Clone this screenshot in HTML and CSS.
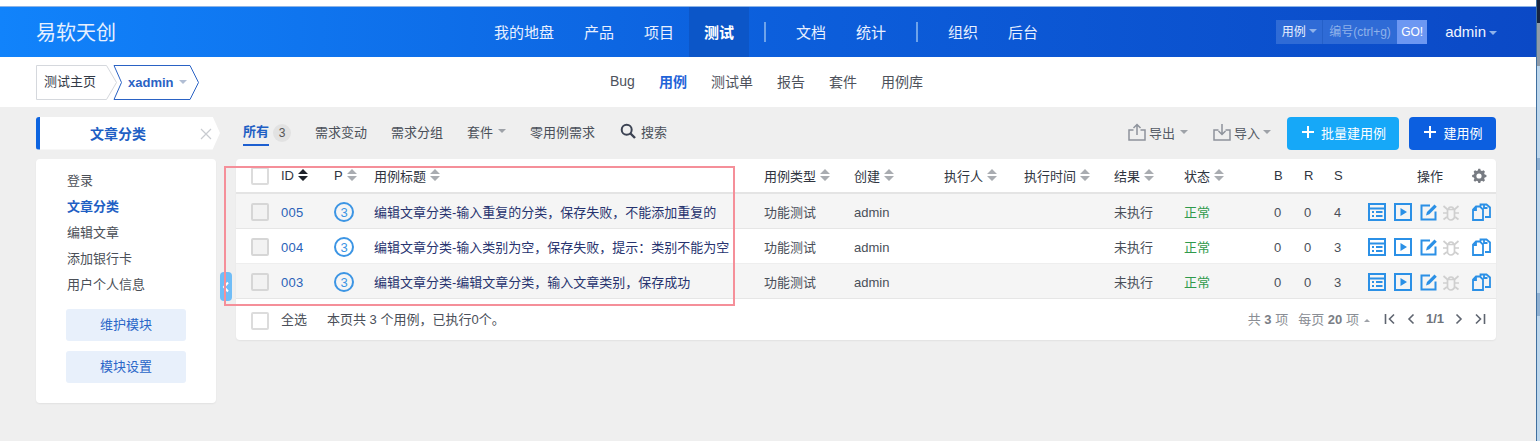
FILE: index.html
```html
<!DOCTYPE html>
<html lang="zh">
<head>
<meta charset="utf-8">
<title>用例</title>
<link rel="stylesheet" href="styles.css">
</head>
<body>
<svg class="defs" width="0" height="0" aria-hidden="true">
  <symbol id="i-list" viewBox="0 0 18 18"><path d="M1 1h16v16H1zM1 5.500h16M4 9h2M8 9h6.500M4 13h2M8 13h6.500" fill="none" stroke="currentColor" stroke-width="2"/></symbol>
  <symbol id="i-play" viewBox="0 0 18 18"><path d="M1 1h16v16H1z" fill="none" stroke="currentColor" stroke-width="2"/><path d="M6.500 5l6.500 4-6.500 4z" fill="currentColor"/></symbol>
  <symbol id="i-edit" viewBox="0 0 18 18"><path d="M15.500 8.500V16.500h-14v-14H10" fill="none" stroke="currentColor" stroke-width="2"/><path d="M6 12.500l1-3.500 7.500-7.500 2.300 2.300-7.500 7.500z" fill="currentColor"/></symbol>
  <symbol id="i-bug" viewBox="0 0 18 18"><path d="M5.500 6.500h7v7a3.500 3.500 0 0 1-7 0zM6.500 6.500a2.500 2.500 0 0 1 5 0M1.500 3l4 3.500M16.500 3l-4 3.500M1 10h4.500M17 10h-4.500M1.500 16.500l4-3M16.500 16.500l-4-3" fill="none" stroke="currentColor" stroke-width="1.700"/></symbol>
  <symbol id="i-copy" viewBox="0 0 19 18"><path d="M11 6.500V17H1V6.500L4 3.500h4zM4 3.500V7H1M8.500 3V1.500h3.500L12 5h3.500M12 1.500h2.500l3.500 3V14h-5" fill="none" stroke="currentColor" stroke-width="1.800"/></symbol>
  <symbol id="i-sort" viewBox="0 0 10 12"><path d="M5 0l5 5H0zM5 12L0 7h10z" fill="currentColor"/></symbol>
</svg>

<div class="page">
  <div class="topstrip"></div>
  <header class="header">
    <div class="brand">易软天创</div>
    <nav class="mainnav">
      <a class="nav-item">我的地盘</a>
      <a class="nav-item">产品</a>
      <a class="nav-item">项目</a>
      <a class="nav-item active">测试</a>
      <span class="nav-sep"></span>
      <a class="nav-item">文档</a>
      <a class="nav-item">统计</a>
      <span class="nav-sep"></span>
      <a class="nav-item">组织</a>
      <a class="nav-item">后台</a>
    </nav>
    <div class="header-right">
      <div class="search">
        <span class="search-type">用例<i class="caret caret-light"></i></span>
        <span class="search-input">编号(ctrl+g)</span>
        <span class="search-go">GO!</span>
      </div>
      <span class="user">admin<i class="caret caret-light"></i></span>
    </div>
  </header>

  <div class="subbar">
    <div class="crumbs">
      <svg class="crumb crumb-home" width="82" height="36" viewBox="0 0 82 36"><path d="M.5.500h70l10 17-10 17H.5z" fill="#fff" stroke="#d5d8dd"/></svg>
      <span class="crumb-text crumb-text-home">测试主页</span>
      <svg class="crumb crumb-prod" width="88" height="36" viewBox="0 0 88 36"><path d="M1 .500h76l8.500 17-8.500 17H1l7.500-17z" fill="#fff" stroke="#2a62c4"/></svg>
      <span class="crumb-text crumb-text-prod">xadmin<i class="caret caret-soft"></i></span>
    </div>
    <nav class="subnav">
      <a>Bug</a>
      <a class="on">用例</a>
      <a>测试单</a>
      <a>报告</a>
      <a>套件</a>
      <a>用例库</a>
    </nav>
  </div>

  <div class="content">
    <div class="toolbar">
      <div class="module-title">
        <span>文章分类</span>
        <svg class="close-x" width="12" height="12" viewBox="0 0 12 12"><path d="M1 1l10 10M11 1L1 11" stroke="#c8cbd0" stroke-width="1.200"/></svg>
      </div>
      <div class="tabs">
        <a class="tab tab-on"><span class="tab-label">所有</span><b class="count">3</b></a>
        <a class="tab">需求变动</a>
        <a class="tab">需求分组</a>
        <a class="tab">套件<i class="caret caret-gray"></i></a>
        <a class="tab tab-zero">零用例需求</a>
        <a class="tab tab-search">
          <svg width="16" height="16" viewBox="0 0 16 16"><circle cx="6.700" cy="6.700" r="5" fill="none" stroke="#3c4353" stroke-width="2"/><path d="M10.500 10.500l4.500 4.500" stroke="#3c4353" stroke-width="2.400"/></svg>
          搜索
        </a>
      </div>
      <div class="actions">
        <a class="io">
          <svg width="18" height="18" viewBox="0 0 18 18"><path d="M5.500 7H1v10h16V7h-4.500M9 12V1.500M5.500 5L9 1.500 12.500 5" fill="none" stroke="#8e939c" stroke-width="1.500"/></svg>
          导出<i class="caret caret-gray"></i>
        </a>
        <a class="io io-in">
          <svg width="18" height="18" viewBox="0 0 18 18"><path d="M5.500 7H1v10h16V7h-4.500M9 1v10.500M5.500 8L9 11.500 12.500 8" fill="none" stroke="#8e939c" stroke-width="1.500"/></svg>
          导入<i class="caret caret-gray"></i>
        </a>
        <a class="btn btn-sky"><span class="plus"></span>批量建用例</a>
        <a class="btn btn-blue"><span class="plus"></span>建用例</a>
      </div>
    </div>

    <div class="main">
      <aside class="side">
        <ul class="tree">
          <li>登录</li>
          <li class="on">文章分类</li>
          <li>编辑文章</li>
          <li>添加银行卡</li>
          <li>用户个人信息</li>
        </ul>
        <a class="side-btn">维护模块</a>
        <a class="side-btn">模块设置</a>
      </aside>

      <section class="panel">
        <div class="row row-head">
          <span class="c c-check"><i class="check"></i></span>
          <span class="c c-id">ID<svg class="sort"><use href="#i-sort"/></svg></span>
          <span class="c c-pri">P<svg class="sort sort-g"><use href="#i-sort"/></svg></span>
          <span class="c c-title">用例标题<svg class="sort sort-g"><use href="#i-sort"/></svg></span>
          <span class="c c-type">用例类型<svg class="sort sort-g"><use href="#i-sort"/></svg></span>
          <span class="c c-by">创建<svg class="sort sort-g"><use href="#i-sort"/></svg></span>
          <span class="c c-runner">执行人<svg class="sort sort-g"><use href="#i-sort"/></svg></span>
          <span class="c c-time">执行时间<svg class="sort sort-g"><use href="#i-sort"/></svg></span>
          <span class="c c-res">结果<svg class="sort sort-g"><use href="#i-sort"/></svg></span>
          <span class="c c-stat">状态<svg class="sort sort-g"><use href="#i-sort"/></svg></span>
          <span class="c c-n">B</span><span class="c c-n">R</span><span class="c c-n">S</span>
          <span class="c c-ops-head">操作</span>
          <svg class="gear" width="16" height="16" viewBox="0 0 16 16"><path d="M8 1.500l1.300 0 .5 1.800 1.400.6 1.600-.9 1.500 1.500-.9 1.600.6 1.400 1.800.5v2l-1.800.5-.6 1.400.9 1.600-1.500 1.500-1.600-.9-1.400.6-.5 1.800h-2l-.5-1.800-1.400-.6-1.600.9-1.500-1.500.9-1.600-.6-1.400-1.800-.5v-2l1.800-.5.6-1.400-.9-1.600 1.500-1.500 1.600.9 1.400-.6.500-1.800z" fill="#777b82" transform="translate(.4 -.6) scale(.95)"/><circle cx="8" cy="8" r="2.600" fill="#fff"/></svg>
        </div>

        <div class="row row-body alt">
          <span class="c c-check"><i class="check check-g"></i></span>
          <a class="c c-id id-link">005</a>
          <span class="c c-pri"><b class="pri">3</b></span>
          <a class="c c-title title-link">编辑文章分类-输入重复的分类，保存失败，不能添加重复的</a>
          <span class="c c-type">功能测试</span>
          <span class="c c-by">admin</span>
          <span class="c c-runner"></span>
          <span class="c c-time"></span>
          <span class="c c-res">未执行</span>
          <span class="c c-stat ok">正常</span>
          <span class="c c-n">0</span><span class="c c-n">0</span><span class="c c-n">4</span>
          <span class="c c-ops">
            <svg class="op"><use href="#i-list"/></svg><svg class="op"><use href="#i-play"/></svg><svg class="op op-edit"><use href="#i-edit"/></svg><svg class="op op-off"><use href="#i-bug"/></svg><svg class="op op-copy"><use href="#i-copy"/></svg>
          </span>
        </div>
        <div class="row row-body">
          <span class="c c-check"><i class="check check-g"></i></span>
          <a class="c c-id id-link">004</a>
          <span class="c c-pri"><b class="pri">3</b></span>
          <a class="c c-title title-link">编辑文章分类-输入类别为空，保存失败，提示：类别不能为空</a>
          <span class="c c-type">功能测试</span>
          <span class="c c-by">admin</span>
          <span class="c c-runner"></span>
          <span class="c c-time"></span>
          <span class="c c-res">未执行</span>
          <span class="c c-stat ok">正常</span>
          <span class="c c-n">0</span><span class="c c-n">0</span><span class="c c-n">3</span>
          <span class="c c-ops">
            <svg class="op"><use href="#i-list"/></svg><svg class="op"><use href="#i-play"/></svg><svg class="op op-edit"><use href="#i-edit"/></svg><svg class="op op-off"><use href="#i-bug"/></svg><svg class="op op-copy"><use href="#i-copy"/></svg>
          </span>
        </div>
        <div class="row row-body alt">
          <span class="c c-check"><i class="check check-g"></i></span>
          <a class="c c-id id-link">003</a>
          <span class="c c-pri"><b class="pri">3</b></span>
          <a class="c c-title title-link">编辑文章分类-编辑文章分类，输入文章类别，保存成功</a>
          <span class="c c-type">功能测试</span>
          <span class="c c-by">admin</span>
          <span class="c c-runner"></span>
          <span class="c c-time"></span>
          <span class="c c-res">未执行</span>
          <span class="c c-stat ok">正常</span>
          <span class="c c-n">0</span><span class="c c-n">0</span><span class="c c-n">3</span>
          <span class="c c-ops">
            <svg class="op"><use href="#i-list"/></svg><svg class="op"><use href="#i-play"/></svg><svg class="op op-edit"><use href="#i-edit"/></svg><svg class="op op-off"><use href="#i-bug"/></svg><svg class="op op-copy"><use href="#i-copy"/></svg>
          </span>
        </div>

        <div class="footer">
          <span class="c c-check"><i class="check check-foot"></i></span>
          <span class="all">全选</span>
          <span class="summary">本页共 3 个用例，已执行0个。</span>
          <div class="pager">
            <span>共 <b>3</b> 项</span>
            <span>每页 <b>20</b> 项<i class="caret-up"></i></span>
            <svg class="pg-first" width="12" height="12" viewBox="0 0 12 12"><path d="M1.500 1v10M10 1.500L5.500 6l4.500 4.500" fill="none" stroke="#5f6570" stroke-width="1.600"/></svg>
            <svg width="10" height="12" viewBox="0 0 10 12"><path d="M7.500 1.500L3 6l4.500 4.500" fill="none" stroke="#5f6570" stroke-width="1.600"/></svg>
            <b class="pg">1/1</b>
            <svg width="10" height="12" viewBox="0 0 10 12"><path d="M2.500 1.500L7 6l-4.500 4.500" fill="none" stroke="#5f6570" stroke-width="1.600"/></svg>
            <svg width="12" height="12" viewBox="0 0 12 12"><path d="M10.500 1v10M2 1.500L6.500 6 2 10.500" fill="none" stroke="#5f6570" stroke-width="1.600"/></svg>
          </div>
        </div>
      </section>
    </div>
  </div>
</div>

<div class="toggle"><svg width="8" height="12" viewBox="0 0 8 12"><path d="M6 1.500L2 6l4 4.500" fill="none" stroke="#fff" stroke-width="2"/></svg></div>
<div class="redbox"></div>
<div class="edge"></div>
</body>
</html>
```

FILE: styles.css
```css
* { box-sizing: border-box; }
html, body { margin: 0; padding: 0; }
body {
  width: 1540px;
  height: 441px;
  overflow: hidden;
  background: #efefef;
  font-family: "Liberation Sans", "Noto Sans CJK SC", sans-serif;
  font-size: 13px;
  color: #3c4353;
  position: relative;
}
.defs { position: absolute; }
i { font-style: normal; }
a { color: inherit; text-decoration: none; }
.page { width: 1536px; }
.topstrip { height: 7px; background: #fff; border-bottom: 1px solid #8db4e6; }

/* Header */
.header {
  height: 50px;
  display: flex;
  align-items: center;
  background: linear-gradient(90deg, #1183fb 0%, #0c5fdc 50%, #0b49c6 100%);
  color: #fff;
  padding-left: 36px;
  position: relative;
}
.brand { font-size: 20px; color: #e6f0ff; width: 122px; padding-bottom: 2px; }
.mainnav { position: absolute; left: 479px; top: 0; height: 50px; display: flex; align-items: center; font-size: 15px; }
.nav-item { height: 50px; display: flex; align-items: center; padding: 0 15px 2px; color: #e8f0ff; }
.nav-item.active { background: #0c56c8; font-weight: 700; color: #fff; }
.nav-sep { width: 2px; height: 20px; background: #6ea3ea; margin: 0 15px; }
.header-right { margin-left: auto; display: flex; align-items: center; padding-right: 39px; }
.search { display: flex; height: 24px; align-items: stretch; font-size: 12px; background: #2f6bd6; }
.search-type { width: 47px; display: flex; align-items: center; justify-content: center; padding-bottom: 3px; color: #eaf1ff; border-right: 1px solid #2560c8; }
.search-input { width: 74px; display: flex; align-items: center; padding: 0 0 3px 6px; color: #8fb2ea; }
.search-go { width: 30px; background: #6c97f2; display: flex; align-items: center; justify-content: center; font-size: 12px; color: #fff; }
.user { margin-left: 18px; font-size: 15px; color: #f0f5ff; padding-bottom: 2px; }

/* Carets */
.caret { display: inline-block; width: 0; height: 0; border-left: 4px solid transparent; border-right: 4px solid transparent; border-top: 4px solid #9a9ea6; margin-left: 4px; vertical-align: middle; }
.caret-light { border-top-color: #8fb2ea; margin-left: 3px; }
.caret-soft { border-top-color: #b1bed4; margin-left: 5px; }
.caret-gray { border-top-color: #9ea2a8; margin-left: 5px; }

/* Subbar */
.subbar { height: 50px; background: #fff; position: relative; }
.crumbs { position: absolute; left: 36px; top: 8px; width: 170px; height: 36px; }
.crumb { position: absolute; top: 0; }
.crumb-home { left: 0; }
.crumb-prod { left: 77px; }
.crumb-text { position: absolute; top: 0; height: 34px; display: flex; align-items: center; font-size: 13px; }
.crumb-text-home { left: 8px; height: 31px; color: #333a47; }
.crumb-text-prod { left: 92px; color: #2a62c4; font-weight: 700; }
.subnav { position: absolute; left: 598px; top: 0; height: 50px; display: flex; align-items: center; font-size: 14px; color: #4d525c; padding-bottom: 3px; }
.subnav a { padding: 0 12px; }
.subnav a.on { color: #1f64d8; font-weight: 700; }

/* Toolbar */
.content { padding: 0 40px 0 36px; }
.toolbar { display: flex; height: 52px; align-items: center; }
.module-title {
  width: 184px;
  height: 33px;
  background: #fff;
  border-left: 4px solid #0d64e0;
  border-radius: 3px 0 0 3px;
  display: flex;
  align-items: center;
  color: #1f5fc4;
  font-size: 14px;
  font-weight: 700;
  position: relative;
  padding-left: 50px;
  clip-path: polygon(0 0, 96% 0, 100% 50%, 96% 100%, 0 100%);
}
.close-x { position: absolute; right: 8px; top: 11px; }
.tabs { margin-left: 23px; display: flex; align-items: center; color: #4a4f59; font-size: 13px; padding-bottom: 4px; }
.tab { height: 33px; display: flex; align-items: center; margin-right: 24px; white-space: nowrap; }
.tab-on { color: #1f5fc4; font-weight: 700; }
.tab-label { height: 31px; padding-top: 2px; align-self: flex-start; display: flex; align-items: center; border-bottom: 2px solid #1d5fd0; }
.count { width: 18px; height: 18px; border-radius: 50%; background: #e2e2e2; margin: 4px 0 0 4px; font-weight: 400; color: #555; font-size: 12px; display: flex; align-items: center; justify-content: center; }
.tab-zero { margin-right: 25px; }
.tab-search { gap: 5px; }
.actions { margin-left: auto; display: flex; align-items: center; color: #555b66; }
.io { display: flex; align-items: center; gap: 3px; margin-right: 25px; white-space: nowrap; padding-bottom: 2px; }
.io .caret { margin-left: 2px; }
.io-in { margin-right: 16px; }
.io-in .caret { margin-left: 0; }
.btn { height: 33px; border-radius: 4px; color: #fff; display: flex; align-items: center; justify-content: center; gap: 7px; padding: 0 0 2px 2px; }
.btn-sky { width: 112px; background: #16a8f8; margin-right: 10px; }
.btn-blue { width: 87px; background: #0c5fe0; }
.plus { width: 12px; height: 12px; background: linear-gradient(#fff, #fff) center / 100% 2px no-repeat, linear-gradient(#fff, #fff) center / 2px 100% no-repeat; }

/* Main */
.main { display: flex; align-items: flex-start; gap: 20px; }
.side { width: 180px; height: 244px; background: #fff; border-radius: 4px; padding: 7px 30px 0; box-shadow: 0 1px 2px rgba(0,0,0,.06); }
.tree { list-style: none; margin: 0 0 13px; padding: 0 0 0 1px; font-size: 13px; color: #4b4f57; }
.tree li { height: 26px; display: flex; align-items: center; white-space: nowrap; }
.tree li.on { color: #1f5fc4; font-weight: 700; }
.side-btn { display: flex; width: 120px; height: 32px; align-items: center; justify-content: center; padding-bottom: 3px; background: #e8f0fb; color: #2a66c8; border-radius: 3px; margin-bottom: 10px; }

/* Table */
.panel { width: 1260px; height: 181px; background: #fff; border-radius: 4px; box-shadow: 0 1px 2px rgba(0,0,0,.06); }
.row { display: flex; align-items: center; position: relative; }
.row-head { height: 35px; color: #30353f; border-bottom: 2px solid #e4e4e4; }
.row-head .c { padding-bottom: 1px; }
.row-head .c-check { padding-bottom: 0; }
.row-body { height: 35px; padding-top: 2px; color: #4a4f59; border-bottom: 1px solid #eeeeee; font-size: 13px; }
.row-body.alt { background: #f5f5f5; border-bottom-color: #e6e6e6; }
.row-body .c-title, .row-body .c-type, .row-body .c-res, .row-body .c-stat { padding-bottom: 2px; }
.c { display: flex; align-items: center; flex: none; white-space: nowrap; }
.c-check { width: 45px; padding-left: 15px; }
.check { display: block; width: 18px; height: 18px; border: 2px solid #dcdcdc; background: #fff; border-radius: 2px; }
.check-g { background: #f2f2f2; border-color: #d6d6d6; }
.check-foot { position: relative; top: 1px; }
.c-id { width: 53px; }
.c-pri { width: 40px; }
.c-title { width: 390px; }
.c-type { width: 90px; }
.c-by { width: 90px; }
.c-runner { width: 80px; }
.c-time { width: 90px; }
.c-res { width: 70px; }
.c-stat { width: 82px; }
.c-n { width: 30px; padding-left: 8px; }
.sort { width: 10px; height: 12px; margin-left: 4px; color: #1f232b; }
.sort-g { color: #a9acb1; }
.id-link { color: #2a62b8; font-size: 13px; letter-spacing: .3px; }
.pri { width: 20px; height: 20px; border-radius: 50%; border: 2px solid #3c95e4; display: flex; align-items: center; justify-content: center; font-weight: 400; font-size: 13px; color: #3c95e4; }
.title-link { color: #27336f; }
.ok { color: #2f9a4c; }
.c-ops { margin-left: 12px; gap: 8px; }
.c-ops-head { margin-left: 61px; }
.op { width: 18px; height: 18px; color: #2b90e6; flex: none; }
.op-edit { margin-right: -4px; }
.op-off { color: #cfcfcf; }
.op-copy { margin-left: 4px; width: 19px; }
.gear { position: absolute; left: 1235px; top: 9px; }

/* Footer */
.footer { height: 41px; display: flex; align-items: center; color: #4a4f59; padding-right: 10px; }
.all { width: 46px; padding-bottom: 2px; }
.summary { padding-bottom: 2px; }
.pager { margin-left: auto; display: flex; align-items: center; gap: 10px; color: #8a8e95; font-size: 13px; padding-bottom: 2px; }
.pager b { color: #7a7e85; }
.pager .pg { color: #6f737a; }
.pg-first { margin-left: 4px; }
.caret-up { display: inline-block; width: 0; height: 0; border-left: 3px solid transparent; border-right: 3px solid transparent; border-bottom: 3px solid #9ea2a8; margin-left: 5px; vertical-align: middle; }

/* Overlays */
.toggle { position: absolute; left: 220px; top: 272px; width: 12px; height: 29px; border-radius: 4px; background: #70bdf7; display: flex; align-items: center; justify-content: center; }
.redbox { position: absolute; left: 224px; top: 166px; width: 511px; height: 140px; border: 2px solid #f58f99; pointer-events: none; }
.edge {
  position: absolute;
  left: 1536px;
  top: 0;
  width: 4px;
  height: 441px;
  border-left: 1px solid #3f6f9f;
  background: linear-gradient(#16243f 0 23px, #8f9ba8 23px 66px, #bcd6ec 66px 158px, #8eb0d2 158px 170px, #bcd6ec 170px 293px, #8eb0d2 293px 316px, #bcd6ec 316px);
}
```
